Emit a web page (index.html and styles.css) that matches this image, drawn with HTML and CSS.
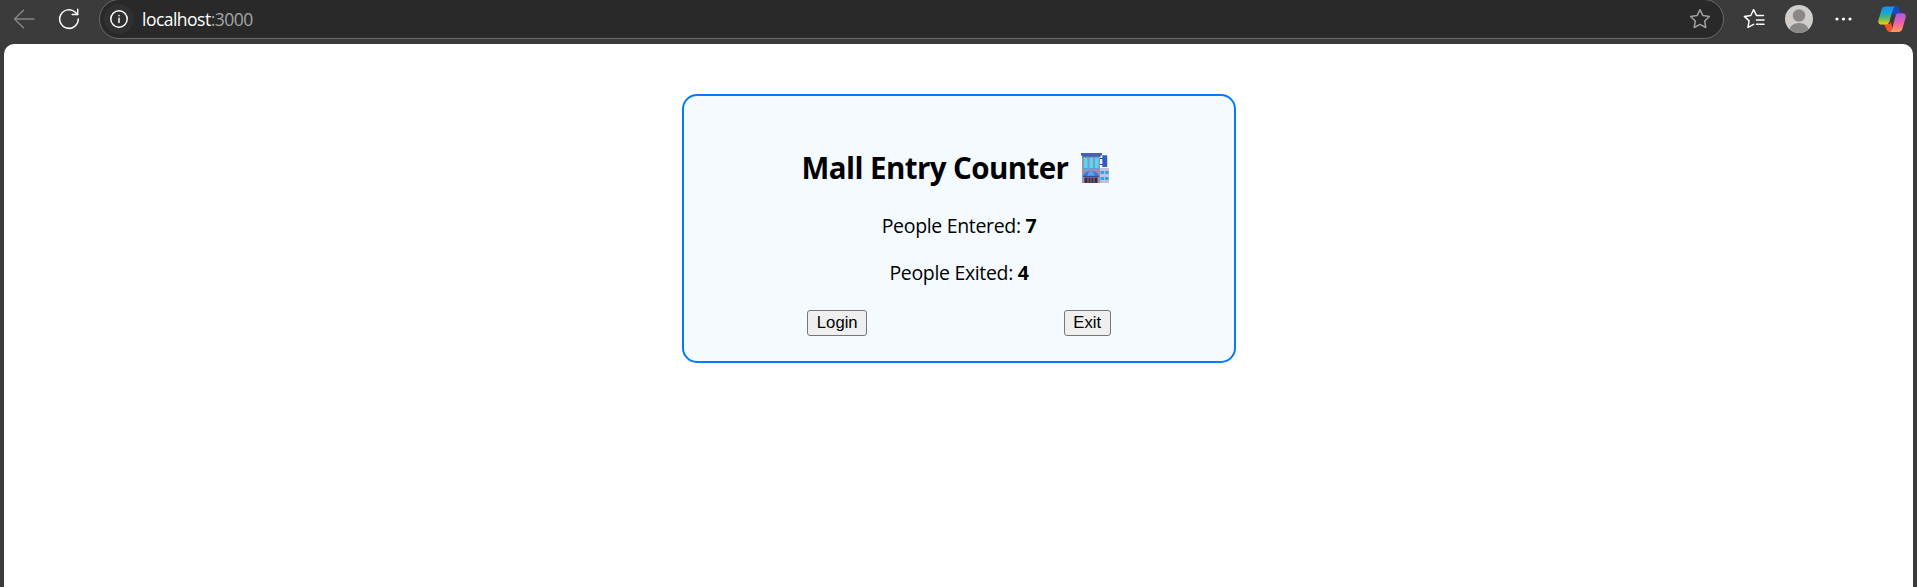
FILE: index.html
```html
<!DOCTYPE html>
<html lang="en">
<head>
<meta charset="utf-8">
<title>Mall Entry Counter</title>
<link rel="stylesheet" href="styles.css">
</head>
<body>
<div class="browser">
  <header class="toolbar">
    <svg class="back" width="22" height="20" viewBox="0 0 22 20"><path d="M21 10H1.5M10.5 1.2L1.5 10l9 8.8"/></svg>
    <svg class="reload" width="22" height="22" viewBox="0 0 22 22"><path d="M20.3 11a9.3 9.3 0 1 1-3-6.8l2.2 2.3"/><path d="M19.7 1.2v5.4h-5.5"/></svg>
    <div class="address">
      <span class="chip"><svg width="20" height="20" viewBox="0 0 20 20"><circle cx="10" cy="10" r="8.2"/><path d="M10 9.2v4.300M10 6.500v.300"/></svg></span>
      <span class="url">localhost<span class="port">:3000</span></span>
      <svg class="star" width="22" height="22" viewBox="0 0 22 22"><path d="M11 1.7l2.9 5.9 6.5.9-4.7 4.5 1.1 6.5-5.8-3.1-5.8 3.1 1.1-6.5-4.7-4.5 6.5-.9z"/></svg>
    </div>
    <svg class="favorites" width="22" height="22" viewBox="0 0 22 22"><path d="M20.5 7.5h-7L10.600 1.700 7.800 7.500l-6.400.900 4.700 4.500L5 19.400l5.600-3"/><path d="M13.500 12h7.500M13.500 16.200h7.500"/></svg>
    <svg class="avatar" width="28" height="28" viewBox="0 0 28 28"><defs><clipPath id="face"><circle cx="14" cy="14" r="14"/></clipPath></defs><g clip-path="url(#face)"><path fill="#d0cdca" d="M0 0h28v28H0z"/><circle cx="14" cy="10.500" r="6.200" fill="#8b8784"/><ellipse cx="14" cy="25" rx="9.500" ry="7" fill="#8b8784"/></g></svg>
    <svg class="dots" width="18" height="4" viewBox="0 0 18 4"><circle cx="2" cy="2" r="1.600"/><circle cx="8.500" cy="2" r="1.600"/><circle cx="15" cy="2" r="1.600"/></svg>
    <svg class="copilot" width="28" height="27" viewBox="0 0 28 27">
      <defs>
        <linearGradient id="cool" x1="0" y1="0" x2="0" y2="1"><stop offset="0" stop-color="#1b8df0"/><stop offset=".35" stop-color="#16a6d8"/><stop offset=".65" stop-color="#58b868"/><stop offset="1" stop-color="#f4d000"/></linearGradient>
        <linearGradient id="warm" x1="0" y1="0" x2="0" y2="1"><stop offset="0" stop-color="#a65bea"/><stop offset=".5" stop-color="#ed5fa8"/><stop offset="1" stop-color="#ff9a55"/></linearGradient>
      </defs>
      <path fill="#1748c8" d="M13 .5h5.200c1.700 0 2.600 1 3.100 2.700l1.200 4h-3.200c-2 0-3 .8-3.700 3z"/>
      <path fill="#f4512d" d="M6 18h5.500l1.500-2 2 10h-3c-2 0-3-1-3.500-2.800z"/>
      <path fill="url(#cool)" d="M7.500.500H18c-1.600 0-2.400 1-3 3l-3.600 12c-.6 2-1.700 3-3.500 3H3.500C.800 18.500-.300 16.500.500 13.700l3-10C4.200 1.500 5.500.500 7.500.500z"/>
      <path fill="url(#warm)" d="M19.500 7.200h5c2.700 0 3.900 1.700 3.100 4.600l-3 10.500c-.7 2.500-2 3.700-4.200 3.700H11c1.500 0 2.400-.8 3-2.800l3.400-12.800c.5-2 1.200-3.200 2.100-3.200z"/>
    </svg>
  </header>
  <main class="page">
    <section class="card">
      <h2 class="title"><span>Mall Entry Counter</span>
        <svg class="mall" width="30" height="30" viewBox="0 0 30 30">
          <path fill="#9693a6" d="M2 2h18v28H2z"/><path fill="#c5bfd7" d="M20 15h9v15h-9z"/>
          <path fill="#3e60cb" d="M1 0h21v2.500H1z"/><path fill="#2549ad" d="M2 2.500h19v1H2z"/>
          <path stroke="#3d4260" d="M20 5.500h3M20 11.500h3"/>
          <path fill="#315ac8" d="M22.300 2.300h4.900V14h-4.900z"/>
          <path fill="#48dbfa" d="M4 5h3.500v11.500H4zM9.500 5H13v11.500H9.500zM15 5h3.500v11.500H15z"/>
          <path fill="#4b9ce0" d="M4 15h3.500v1.500H4zM9.500 15H13v1.500H9.500zM15 15h3.500v1.500H15z"/>
          <path fill="#347dde" d="M3 24c.500-4 3.500-6 8-6s7.500 2 8 6z"/><path fill="#58a4f0" d="M7.500 23c.300-2.800 1.500-5 3.500-5s3.200 2.200 3.500 5z"/><path fill="#354cad" d="M3 22.800h16V24H3z"/>
          <path fill="#42283f" d="M4.500 24.500h13V30h-13z"/><path stroke="#887a94" stroke-width="1" d="M8 24.500V30M11 24.500V30M14 24.500V30"/>
          <path fill="#29a6f5" d="M20.500 18h3.500v3h-3.500zM25 18h3.500v3H25zM20.500 24h3.500v3h-3.500zM25 24h3.500v3H25z"/>
        </svg>
      </h2>
      <p class="count entered">People Entered: <strong>7</strong></p>
      <p class="count exited">People Exited: <strong>4</strong></p>
      <div class="actions"><button class="login">Login</button><button class="exit">Exit</button></div>
    </section>
  </main>
</div>
</body>
</html>
```
FILE: styles.css
```css
* { box-sizing: border-box; }
body { margin: 0; font-family: "Open Sans", "Noto Sans", sans-serif; color: #000; }
.browser { height: 587px; background: #3b3b3b; padding: 0 4px; overflow: hidden; }
.toolbar { height: 44px; display: flex; align-items: flex-start; }
.toolbar svg { display: block; flex: none; fill: none; stroke: #fff; stroke-width: 1.5; stroke-linecap: round; stroke-linejoin: round; }
.toolbar .back { margin: 9px 0 0 9px; stroke: #858585; }
.reload { margin: 8px 0 0 23px; }
.address { width: 1625px; height: 40px; margin: -1px 0 0 19px; border: 1px solid #696969; border-radius: 20px; background: #292929; display: flex; align-items: center; padding: 0 12px 0 4px; }
.chip { width: 30px; height: 30px; border-radius: 50%; background: #303030; display: flex; align-items: center; justify-content: center; }
.url { margin-left: 8px; font-size: 17.5px; line-height: 24px; letter-spacing: -.52px; color: #fff; white-space: nowrap; position: relative; top: -.5px; }
.port { color: #a6a6a6; }
.address .star { margin-left: auto; stroke: #a0a0a0; }
.favorites { margin: 8px 0 0 19px; }
.avatar { margin: 5px 0 0 20px; }
.toolbar .avatar, .toolbar .copilot { stroke: none; }
.toolbar .dots { margin: 17px 0 0 22px; fill: #fff; stroke: none; }
.copilot { margin: 6px 0 0 25px; }
.page { height: 543px; background: #fff; border-radius: 10px 10px 0 0; padding-top: 50px; }
.card { width: 554px; height: 269px; margin: 0 auto; border: 2px solid #007bff; border-radius: 15px; background: #f5faff; padding: 51px 25px 0; position: relative; left: .5px; }
.title { margin: 0; height: 42px; padding-right: 6px; display: flex; align-items: center; justify-content: center; gap: 12px; font-size: 29.5px; line-height: 40px; letter-spacing: -.58px; white-space: nowrap; }
.mall { display: block; margin-bottom: 1px; }
.count { margin: 20px 0 0; text-align: center; font-size: 19.5px; line-height: 27px; letter-spacing: -.33px; }
.entered { margin-top: 23px; }
.actions { display: flex; justify-content: space-around; margin-top: 24px; }
button { height: 26px; padding: 0; border: 1px solid #767676; border-radius: 3px; background: #efefef; color: #000; font: 16.667px/20px "Liberation Sans", Arial, sans-serif; }
.login { width: 60px; }
.exit { width: 47px; }
```
